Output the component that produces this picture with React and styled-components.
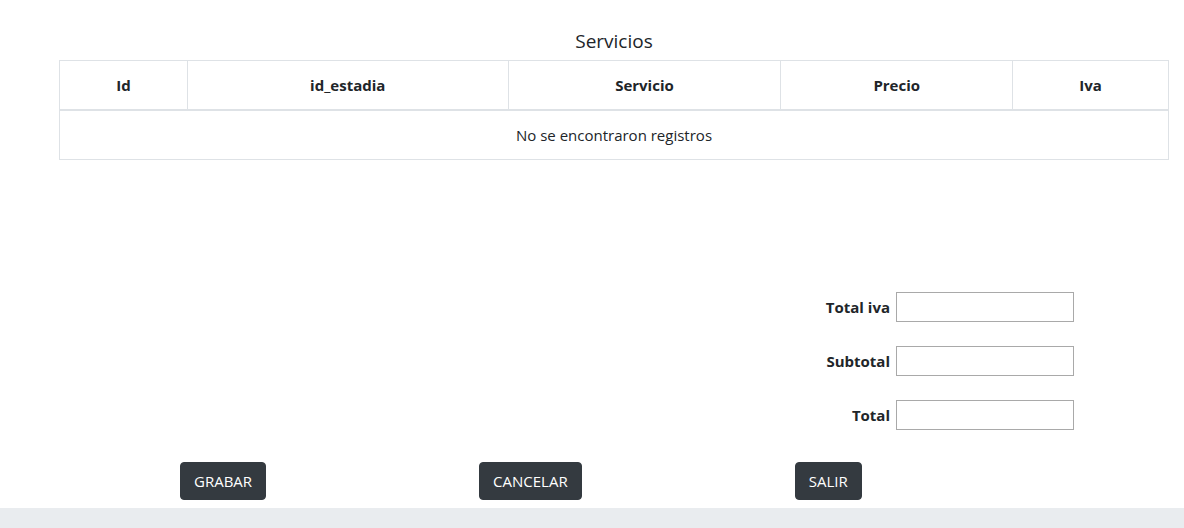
import React from "react";
import styled, { createGlobalStyle } from "styled-components";

const Global = createGlobalStyle`
  html, body { margin: 0; padding: 0; background: #fff; }
  body { font-family: "Open Sans", "Noto Sans", sans-serif; color: #212529; }
  * { box-sizing: border-box; }
`;

const Page = styled.div`
  width: 1184px;
  height: 528px;
  display: flex;
  flex-direction: column;
  overflow: hidden;
`;

const Main = styled.div`
  flex: 1;
  padding: 28px 16px 0 59px;
  display: flex;
  flex-direction: column;
`;

const Title = styled.h5`
  margin: 0 0 6px 0;
  width: 1110px;
  text-align: center;
  font-size: 19px;
  font-weight: 400;
  line-height: 26px;
`;

const Table = styled.table`
  width: 1110px;
  border-collapse: collapse;
  font-size: 15px;
`;

const Th = styled.th`
  width: ${(p) => p.w}px;
  height: 49px;
  border: 1px solid #dee2e6;
  border-bottom: 2px solid #dee2e6;
  text-align: center;
  font-weight: 700;
  padding: 0 12px;
`;

const Td = styled.td`
  height: 50px;
  border: 1px solid #dee2e6;
  text-align: center;
  padding: 0 12px;
`;

const Totals = styled.div`
  margin: 132px 0 0 731px;
  display: grid;
  grid-template-columns: 100px 178px;
  column-gap: 6px;
  row-gap: 24px;
  align-items: center;
`;

const Label = styled.label`
  justify-self: end;
  font-weight: 700;
  font-size: 15px;
`;

const Input = styled.input`
  width: 178px;
  height: 30px;
  border: 1px solid #a9a9a9;
  border-radius: 0;
  padding: 2px 4px;
  font-size: 15px;
`;

const Buttons = styled.div`
  margin: 32px 0 0 121px;
  display: flex;
  gap: 213px;
`;

const Button = styled.button`
  height: 38px;
  padding: 0 13px;
  background: #343a40;
  border: 1px solid #343a40;
  border-radius: 4px;
  color: #fff;
  font-family: "Open Sans", "Noto Sans", sans-serif;
  font-size: 15px;
`;

const Footer = styled.div`
  height: 20px;
  background: #e9ecef;
`;

const cols = [
  ["Id", 128],
  ["id_estadia", 321],
  ["Servicio", 273],
  ["Precio", 232],
  ["Iva", 156],
];

export default function App() {
  return (
    <Page>
      <Global />
      <Main>
        <Title>Servicios</Title>
        <Table>
          <thead>
            <tr>
              {cols.map(([c, w]) => (
                <Th key={c} w={w}>{c}</Th>
              ))}
            </tr>
          </thead>
          <tbody>
            <tr>
              <Td colSpan={5}>No se encontraron registros</Td>
            </tr>
          </tbody>
        </Table>
        <Totals>
          <Label>Total iva</Label>
          <Input />
          <Label>Subtotal</Label>
          <Input />
          <Label>Total</Label>
          <Input />
        </Totals>
        <Buttons>
          <Button>GRABAR</Button>
          <Button>CANCELAR</Button>
          <Button>SALIR</Button>
        </Buttons>
      </Main>
      <Footer />
    </Page>
  );
}
